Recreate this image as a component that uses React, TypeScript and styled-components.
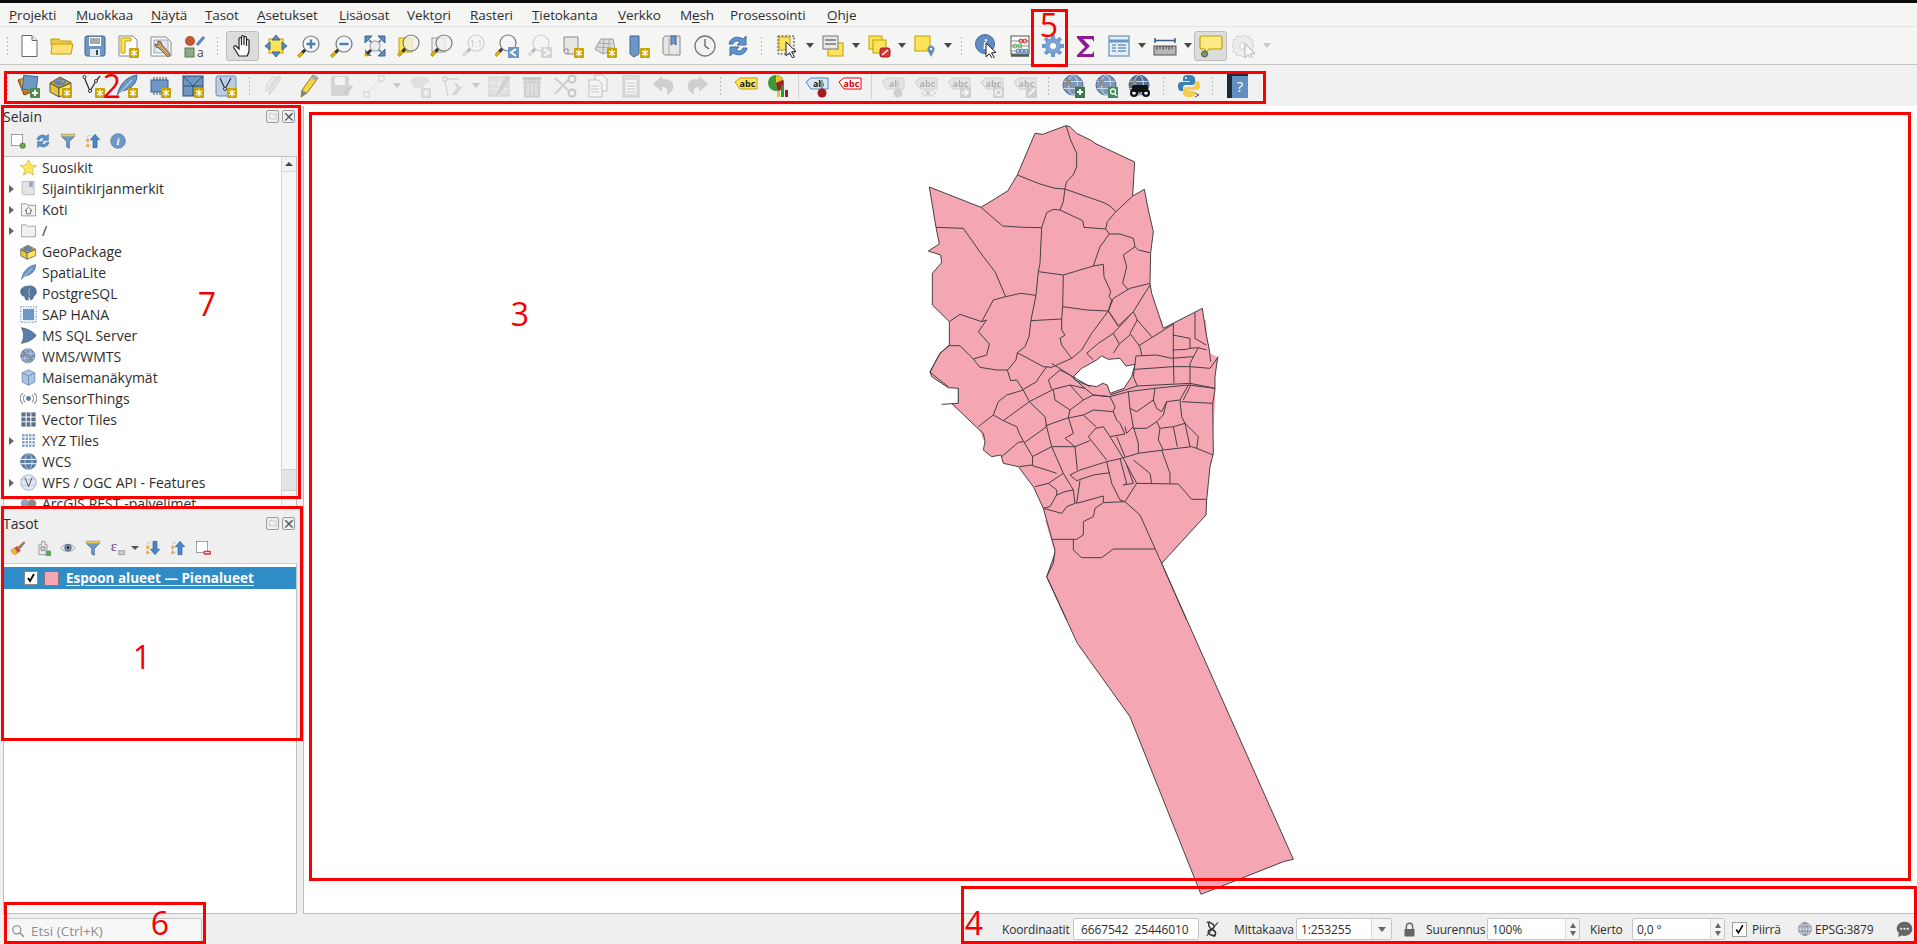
import React from "react";
import styled, { createGlobalStyle } from "styled-components";

const Global = createGlobalStyle`
  html, body { margin: 0; padding: 0; background: #efefef; overflow: hidden; }
  body { font-family: "Open Sans", "Noto Sans", sans-serif; color: #2e2e2e; }
  #root { width: 1917px; height: 944px; }
`;

const Page = styled.div`
  position: relative;
  width: 1917px;
  height: 944px;
  display: flex;
  flex-direction: column;
  overflow: hidden;
  background: #efefef;
`;
const TopEdge = styled.div`height: 3px; background: #0c0c0c; flex: none;`;
const MenuBar = styled.nav`
  height: 24px;
  flex: none;
  display: flex;
  align-items: center;
  padding-left: 1px;
  background: #f5f5f4;
  border-bottom: 1px solid #e3e3e3;
  box-sizing: border-box;
`;
const MenuItem = styled.span<{ $w: number }>`
  width: ${(p) => p.$w}px;
  padding-left: 8px;
  box-sizing: border-box;
  font-size: 13.5px;
  letter-spacing: -0.1px;
  white-space: nowrap;
  color: #2e2e2e;
  u { text-underline-offset: 2px; }
`;
const ToolRow = styled.div<{ $h: number; $bg: string; $line?: boolean }>`
  height: ${(p) => p.$h}px;
  flex: none;
  box-sizing: border-box;
  display: flex;
  align-items: center;
  padding-left: 4px;
  background: ${(p) => p.$bg};
  border-bottom: ${(p) => (p.$line ? "1px solid #c4c4c4" : "0")};
`;
const Grip = styled.div<{ $w?: number }>`
  width: ${(p) => p.$w ?? 16}px;
  flex: none;
  height: 24px;
  position: relative;
  &::after {
    content: "";
    position: absolute;
    left: 50%;
    top: 2px;
    bottom: 2px;
    width: 4px;
    margin-left: -2px;
    background-image: radial-gradient(#bdbdbd 0.8px, transparent 0.9px);
    background-size: 3px 4px;
  }
`;
const ThinSep = styled.div<{ $w: number }>`
  width: ${(p) => p.$w}px;
  flex: none;
  height: 26px;
  position: relative;
  &::after {
    content: "";
    position: absolute;
    left: 50%;
    top: 0;
    bottom: 0;
    width: 1px;
    background: #d2d2d2;
  }
`;
const ToolBtn = styled.div<{ $on?: boolean; $off?: boolean }>`
  width: 33px;
  height: 30px;
  flex: none;
  display: flex;
  align-items: center;
  justify-content: center;
  box-sizing: border-box;
  border-radius: 3px;
  background: ${(p) => (p.$on ? "#dcdcdc" : "transparent")};
  border: 1px solid ${(p) => (p.$on ? "#bcbcbc" : "transparent")};
  svg {
    ${(p) => (p.$off ? "filter: grayscale(1) opacity(.32);" : "")}
  }
`;
const DropArrow = styled.div<{ $off?: boolean }>`
  width: 13px;
  flex: none;
  display: flex;
  justify-content: center;
  &::after {
    content: "";
    border-left: 4px solid transparent;
    border-right: 4px solid transparent;
    border-top: 5px solid ${(p) => (p.$off ? "#c8c8c8" : "#4a4a4a")};
  }
`;
const Main = styled.div`
  flex: 1;
  min-height: 0;
  display: flex;
`;
const Dock = styled.aside`
  width: 303px;
  flex: none;
  display: flex;
  flex-direction: column;
`;
const PanelHead = styled.div`
  height: 20px;
  flex: none;
  display: flex;
  align-items: center;
  padding: 0 8px 0 3px;
  font-size: 14px;
  gap: 3px;
`;
const PanelTitle = styled.span`flex: 1; color: #2e2e2e;`;
const FloatBtn = styled.span`
  width: 11px;
  height: 11px;
  border: 1px solid #9c9c9c;
  border-radius: 2px;
  display: flex;
  align-items: center;
  justify-content: center;
  color: #555;
`;
const PanelTools = styled.div`
  height: 30px;
  flex: none;
  display: flex;
  align-items: center;
  padding-left: 5px;
`;
const PanelBtn = styled.span`
  width: 25px;
  flex: none;
  display: flex;
  justify-content: center;
`;
const PanelDrop = styled.span`
  width: 12px;
  margin-left: -1px;
  margin-right: -1px;
  flex: none;
  display: flex;
  justify-content: center;
  &::after {
    content: "";
    border-left: 4px solid transparent;
    border-right: 4px solid transparent;
    border-top: 4px solid #555;
  }
`;
const TreeBox = styled.div`
  height: 350px;
  flex: none;
  margin: 0 6px 0 3px;
  background: #fff;
  border: 1px solid #bfbfbf;
  border-bottom: 0;
  display: flex;
  overflow: hidden;
  box-sizing: border-box;
`;
const TreeList = styled.div`flex: 1; min-width: 0;`;
const TreeRow = styled.div`
  height: 21px;
  display: flex;
  align-items: center;
  font-size: 14px;
  white-space: nowrap;
`;
const Twisty = styled.span<{ $open: boolean }>`
  width: 13px;
  margin-left: 1px;
  flex: none;
  display: flex;
  justify-content: center;
  &::after {
    content: "";
    visibility: ${(p) => (p.$open ? "visible" : "hidden")};
    border-top: 4px solid transparent;
    border-bottom: 4px solid transparent;
    border-left: 5px solid #666;
  }
`;
const TreeIcon = styled.span`
  width: 18px;
  margin: 0 5px 0 1px;
  flex: none;
  display: flex;
  justify-content: center;
`;
const ScrollBar = styled.div`
  width: 14px;
  flex: none;
  background: #f6f6f6;
  border-left: 1px solid #d4d4d4;
  display: flex;
  flex-direction: column;
  align-items: stretch;
`;
const ScrollCap = styled.div`
  height: 14px;
  flex: none;
  background: #f2f2f2;
  border-bottom: 1px solid #d8d8d8;
  display: flex;
  align-items: center;
  justify-content: center;
  &::after {
    content: "";
    border-left: 4px solid transparent;
    border-right: 4px solid transparent;
    border-bottom: 4px solid #444;
  }
`;
const ScrollTrack = styled.div`flex: 1;`;
const ScrollThumb = styled.div`
  height: 20px;
  flex: none;
  background: #e4e4e4;
  border-top: 1px solid #d0d0d0;
  border-bottom: 1px solid #d0d0d0;
  margin-bottom: 15px;
`;
const Splitter = styled.div`
  height: 7px;
  flex: none;
  display: flex;
  justify-content: center;
  &::after {
    content: "";
    width: 20px;
    height: 2px;
    margin-top: 2px;
    background-image: radial-gradient(#bdbdbd 0.8px, transparent 0.9px);
    background-size: 3px 2px;
  }
`;
const LayerList = styled.div`
  flex: 1;
  margin: 0 6px 0 3px;
  background: #fff;
  border: 1px solid #bfbfbf;
  border-top-color: #d0d0d0;
  padding-top: 3px;
`;
const LayerRow = styled.div`
  height: 22px;
  background: #308cc6;
  display: flex;
  align-items: center;
  padding-left: 20px;
`;
const LayerCheck = styled.span`
  width: 12px;
  height: 12px;
  background: #fff;
  border: 1px solid #8a8a8a;
  display: flex;
  align-items: center;
  justify-content: center;
`;
const Swatch = styled.span`
  width: 15px;
  height: 15px;
  margin-left: 6px;
  background: #f4a6b3;
  border: 1px solid #8f7078;
  box-sizing: border-box;
`;
const LayerName = styled.span`
  margin-left: 7px;
  font-size: 13.5px;
  font-weight: 700;
  color: #fff;
  text-decoration: underline;
  text-underline-offset: 2px;
  white-space: nowrap;
`;
const Canvas = styled.main`
  flex: 1;
  min-width: 0;
  background: #fff;
  border-left: 1px solid #bfbfbf;
  border-bottom: 1px solid #bfbfbf;
  overflow: hidden;
  svg { display: block; width: 100%; height: 100%; }
`;
const StatusBar = styled.footer`
  height: 30px;
  flex: none;
  display: flex;
  align-items: center;
  padding: 0 4px 0 5px;
  background: #efefef;
  font-size: 12px;
`;
const SearchBox = styled.div`
  width: 197px;
  height: 26px;
  margin-top: 4px;
  box-sizing: border-box;
  background: #f7f7f7;
  border: 1px solid #c6c6c6;
  border-radius: 2px;
  display: flex;
  align-items: center;
  padding-left: 5px;
  gap: 6px;
  color: #8d8d8d;
  font-size: 13.5px;
`;
const StatusGroup = styled.div`
  margin-left: auto;
  display: flex;
  align-items: center;
  height: 100%;
`;
const StatusLabel = styled.span<{ $w: number; $gap: number }>`
  width: ${(p) => p.$w}px;
  margin-right: ${(p) => p.$gap}px;
  flex: none;
  white-space: nowrap;
  letter-spacing: -0.15px;
  color: #2e2e2e;
`;
const Field = styled.div<{ $w: number; $gap: number }>`
  width: ${(p) => p.$w}px;
  margin-right: ${(p) => p.$gap}px;
  height: 22px;
  flex: none;
  box-sizing: border-box;
  background: #fff;
  border: 1px solid #c6c6c6;
  border-radius: 2px;
  display: flex;
  align-items: center;
  justify-content: space-between;
  padding-left: 4px;
  letter-spacing: -0.1px;
  white-space: nowrap;
`;
const ComboArrow = styled.span`
  width: 19px;
  height: 100%;
  border-left: 1px solid #d8d8d8;
  background: #f4f4f4;
  display: flex;
  align-items: center;
  justify-content: center;
  &::after {
    content: "";
    border-left: 4px solid transparent;
    border-right: 4px solid transparent;
    border-top: 5px solid #666;
  }
`;
const Spinner = styled.span`
  width: 14px;
  height: 100%;
  background: #f4f4f4;
  border-left: 1px solid #dcdcdc;
  display: flex;
  flex-direction: column;
  align-items: center;
  justify-content: space-around;
  padding: 2px 0;
  box-sizing: border-box;
`;
const SpinUp = styled.i`
  border-left: 3.5px solid transparent;
  border-right: 3.5px solid transparent;
  border-bottom: 5px solid #666;
`;
const SpinDown = styled.i`
  border-left: 3.5px solid transparent;
  border-right: 3.5px solid transparent;
  border-top: 5px solid #666;
`;
const StatusIcon = styled.span<{ $w: number; $gap: number }>`
  width: ${(p) => p.$w}px;
  margin-right: ${(p) => p.$gap}px;
  flex: none;
  display: flex;
  justify-content: center;
`;
const StatusCheck = styled.span`
  width: 13px;
  height: 13px;
  margin-right: 5px;
  background: #fff;
  border: 1px solid #a0a0a0;
  flex: none;
  display: flex;
  align-items: center;
  justify-content: center;
`;
const Note = styled.div<{ $x: number; $y: number; $w: number; $h: number }>`
  position: absolute;
  left: ${(p) => p.$x}px;
  top: ${(p) => p.$y}px;
  width: ${(p) => p.$w}px;
  height: ${(p) => p.$h}px;
  box-sizing: border-box;
  border: 3px solid #fa0000;
  pointer-events: none;
`;
const NoteNum = styled.span<{ $x: number; $y: number }>`
  position: absolute;
  left: ${(p) => p.$x}px;
  top: ${(p) => p.$y}px;
  transform: translate(-50%, -50%);
  color: #f50000;
  font-family: "Open Sans", sans-serif;
  font-size: 32px;
  line-height: 1;
`;

/* ---------- icon parts ---------- */
const Y = "#fde45a";
const YS = "#c4a000";
const B = "#6d97c4";
const BS = "#3f6690";
const Star = () => (
  <g>
    <rect x="13" y="14" width="10" height="10" rx="1" fill="#c9a300" />
    <path d="M18 15.5v7M15 17l6 4M21 17l-6 4" stroke="#fff" strokeWidth="1.3" />
  </g>
);
const Lens = ({ x = 14, y = 9, r = 7, f = "#f3f6f8" }: { x?: number; y?: number; r?: number; f?: string }) => (
  <g>
    <path d={`M${x - r * 0.7} ${y + r * 0.7}L${x - r * 0.7 - 7} ${y + r * 0.7 + 7}`} stroke="#333" strokeWidth="3" />
    <path d={`M${x - r * 0.7 - 3} ${y + r * 0.7 + 3}L${x - r * 0.7 - 7} ${y + r * 0.7 + 7}`} stroke="#e0b000" strokeWidth="3" />
    <circle cx={x} cy={y} r={r} fill={f} stroke="#7a7a7a" strokeWidth="1.2" />
  </g>
);
const Cursor = ({ x = 10, y = 9 }: { x?: number; y?: number }) => (
  <path
    transform={`translate(${x} ${y})`}
    d="M0 0l10 9.5-4.5.3 3 5-2 1-3-5-3.5 3z"
    fill="#fff"
    stroke="#222"
    strokeWidth="1"
  />
);
const Globe = ({ dark }: { dark?: boolean }) => (
  <g>
    <circle cx="11" cy="11" r="10" fill={dark ? "#54708f" : "#7b97bb"} stroke="#4d6a8f" />
    <ellipse cx="11" cy="11" rx="4.5" ry="10" fill="none" stroke="#d8dfe8" strokeWidth=".9" />
    <path d="M1.6 7.5h18.8M1.6 14.5h18.8" stroke="#d8dfe8" strokeWidth=".9" />
    <path d="M4 5l5 1-1 5-4 1zM13 12h5l-2 6-3-1z" fill="#8c8c8c" />
  </g>
);
const AbcTag = ({ t = "abc", f = Y, s = YS, c = "#222" }: { t?: string; f?: string; s?: string; c?: string }) => (
  <g>
    <path d="M1 8l5-4h17v11H6z" fill={f} stroke={s} />
    <text x="13.5" y="13" textAnchor="middle" fontSize="9" fontWeight="700" fontFamily="Open Sans" fill={c}>
      {t}
    </text>
  </g>
);
const Grid = ({ n, f, gap }: { n: number; f: string; gap: number }) => {
  const out: React.ReactElement[] = [];
  const s = (18 - gap * (n - 1)) / n;
  for (let i = 0; i < n; i++)
    for (let j = 0; j < n; j++)
      out.push(<rect key={i * 10 + j} x={3 + i * (s + gap)} y={3 + j * (s + gap)} width={s} height={s} fill={f} />);
  return <g>{out}</g>;
};
const Doc = () => (
  <g>
    <path d="M5 2h9l5 5v15H5z" fill="#fff" stroke="#555" />
    <path d="M8 9h8M8 12h8M8 15h8M8 18h8" stroke="#666" />
  </g>
);
const Pages = () => (
  <g>
    <path d="M9 1h8l4 4v12H9z" fill="#fff" stroke="#555" />
    <path d="M3 6h9l4 4v13H3z" fill="#fff" stroke="#555" />
    <path d="M5 12h8M5 15h8M5 18h8" stroke="#666" />
  </g>
);

const ICONS: Record<string, React.ReactNode> = {
  new: (<g><path d="M5 1.5h10l5 5v16H5z" fill="#fff" stroke="#666" /><path d="M15 1.5v5h5" fill="#eee" stroke="#666" /></g>),
  open: (<g><path d="M1 5h8l2 2h10v4H1z" fill="#e9c94a" stroke={YS} /><path d="M1 20l1-10h21l-2 10z" fill="#fde073" stroke={YS} /></g>),
  save: (<g><rect x="2" y="2" width="20" height="20" rx="2" fill={B} stroke={BS} /><rect x="6" y="3" width="12" height="9" fill="#fff" /><path d="M7 5h10M7 7h10M7 9h10" stroke="#555" /><rect x="7" y="15" width="10" height="7" fill="#e8e8e8" /><rect x="13" y="16" width="2" height="5" fill="#444" /></g>),
  layout: (<g><path d="M3 2h14l4 4v16H3z" fill="#fff" stroke="#888" /><path d="M5 4h10v3H9v12H5z" fill={Y} stroke={YS} /><Star /></g>),
  manager: (<g><path d="M2 3h15l5 5v14H2z" fill="#fff" stroke="#888" /><rect x="5" y="6" width="14" height="13" fill="#dfe7f2" stroke="#9ab" /><path d="M9 7l3 1 1 3 8 9-2 3-9-9-3-1-1-3 3 1z" fill="#c9a26a" stroke="#6b5a3a" /></g>),
  style: (<g><circle cx="8" cy="7" r="5" fill="#c1582e" /><rect x="3" y="14" width="9" height="9" fill="#8aab8a" stroke="#5d7d5d" /><path d="M15 11L22 3" stroke="#5b86b8" strokeWidth="3" /><text x="15" y="23" fontSize="12" fontFamily="Open Sans" fill="#444">a</text></g>),
  hand: (<path d="M8 22l-5-8c-1-2 1-3 2-2l3 3V5c0-2 2.500-2 2.500 0v6V3c0-2 2.500-2 2.500 0v8V4c0-2 2.500-2 2.500 0v8V7c0-2 2.500-2 2.500 0v9c0 3-1 4-2 6z" fill="#fff" stroke="#222" strokeWidth="1.2" />),
  pan: (<g><rect x="5" y="5" width="14" height="14" fill={Y} stroke={YS} /><path d="M12 1l4 5H8zM12 23l4-5H8zM1 12l5-4v8zM23 12l-5-4v8z" fill="#5f8cbc" stroke={BS} /></g>),
  zoomin: (<g><Lens x={14} y={10} r={8} /><path d="M14 5.500v9M9.500 10h9" stroke="#4e7db0" strokeWidth="2.4" /></g>),
  zoomout: (<g><Lens x={14} y={10} r={8} /><path d="M9.500 10h9" stroke="#4e7db0" strokeWidth="2.4" /></g>),
  full: (<g><path d="M2 2h7L2 9zM22 2v7l-7-7zM22 22h-7l7-7z" fill="#5f8cbc" stroke={BS} /><path d="M2 15l7 7H2z" fill="#5f8cbc" /><path d="M6 6l4 4M18 6l-4 4M18 18l-4-4" stroke="#5f8cbc" strokeWidth="2" /><circle cx="12" cy="12" r="5" fill="#e8edf2" stroke="#999" /><path d="M8 16l-5 5" stroke="#333" strokeWidth="3" /><path d="M4 20l-2 2" stroke="#e0b000" strokeWidth="3" /></g>),
  zlayer: (<g><rect x="3" y="4" width="13" height="14" fill={Y} stroke={YS} /><Lens x={15} y={9} r={8} f="rgba(240,240,240,.75)" /></g>),
  zsel: (<g><rect x="3" y="4" width="13" height="14" fill="#eee" stroke="#999" /><Lens x={15} y={9} r={8} f="rgba(240,240,240,.75)" /></g>),
  znative: (<g><Lens x={14} y={9} r={8} /><text x="14" y="13" textAnchor="middle" fontSize="9" fontFamily="Open Sans" fill="#555">1:1</text></g>),
  zlast: (<g><Lens x={13} y={9} r={8} /><rect x="13" y="13" width="11" height="11" fill={B} /><path d="M21 15l-5 3.500 5 3.500" fill="none" stroke="#fff" strokeWidth="2" /></g>),
  znext: (<g><Lens x={13} y={9} r={8} /><rect x="13" y="13" width="11" height="11" fill={B} /><path d="M16 15l5 3.500-5 3.500" fill="none" stroke="#fff" strokeWidth="2" /></g>),
  mapview: (<g><path d="M3 3h14v17H7c-3 0-4-1-4-3z" fill="#e6e6e6" stroke="#888" /><path d="M3 17c0-2 2-2 4-2v5" fill="none" stroke="#888" /><Star /></g>),
  view3d: (<g><path d="M1 15l6-10h12l2 10-12 5z" fill="#dcdcdc" stroke="#999" /><path d="M5 9l13 1M3 13l16 1M10 5l-1 14M15 5l0 13" stroke="#aaa" /><Star /></g>),
  bookmark: (<g><path d="M3 2h9v18l-5 3-4-3z" fill={B} stroke={BS} /><Star /></g>),
  bookmarks: (<g><path d="M5 2h15v19H6c-2 0-3-1-3-3V4z" fill="#e6e6e6" stroke="#888" /><path d="M9 20V4" stroke="#aaa" /><path d="M11 2h5v9l-2.500-2-2.500 2z" fill={B} stroke={BS} /></g>),
  clock: (<g><circle cx="12" cy="12" r="10" fill="#f3f3f3" stroke="#777" strokeWidth="1.3" /><path d="M12 5v7l4 3" fill="none" stroke="#555" strokeWidth="1.2" /></g>),
  refresh: (<g><path d="M3 10c1-6 8-9 14-5l3-3v9h-9l3-3c-3-2-6-1-7 2z" fill="#5e94cf" stroke="#3f6fa5" /><path d="M21 14c-1 6-8 9-14 5l-3 3v-9h9l-3 3c3 2 6 1 7-2z" fill="#5e94cf" stroke="#3f6fa5" /></g>),
  select: (<g><rect x="3" y="2" width="16" height="18" fill="#eee" stroke="#333" strokeDasharray="2 1.500" /><rect x="4" y="3" width="11" height="13" fill={Y} stroke={YS} /><Cursor x={11} y={8} /></g>),
  selattr: (<g><rect x="7" y="9" width="15" height="13" fill={Y} stroke={YS} /><rect x="2" y="2" width="15" height="13" fill="#e8e8e8" stroke="#777" /><path d="M4 6h11M4 10h11" stroke="#777" strokeWidth="1.500" /></g>),
  deselect: (<g><rect x="2" y="2" width="13" height="13" fill={Y} stroke={YS} /><rect x="6" y="6" width="13" height="13" fill={Y} stroke={YS} /><rect x="13" y="14" width="10" height="9" rx="2" fill="#d33" stroke="#922" /><path d="M15 21l6-5" stroke="#fff" strokeWidth="1.500" /></g>),
  selloc: (<g><rect x="2" y="2" width="15" height="15" fill={Y} stroke={YS} /><path d="M18 23l-3-6a3.500 3.500 0 1 1 6 0z" fill="#5f8cbc" /><circle cx="18" cy="15" r="1.200" fill="#fff" /></g>),
  identify: (<g><circle cx="10" cy="10" r="9.500" fill="#5f8cc4" stroke="#456b96" /><text x="10" y="15" textAnchor="middle" fontSize="14" fontStyle="italic" fontWeight="700" fontFamily="Liberation Serif" fill="#fff">i</text><Cursor x={11} y={9} /></g>),
  abacus: (<g><rect x="3" y="2" width="18" height="18" fill="#fff" stroke="#555" /><path d="M3 21.500h18" stroke="#555" strokeWidth="2.500" /><path d="M3 7h18M3 12h18M3 17h18" stroke="#888" /><circle cx="13" cy="7" r="2" fill="none" stroke="#c22" /><circle cx="17" cy="7" r="2" fill="none" stroke="#c22" /><circle cx="7" cy="12" r="2" fill="none" stroke="#4a4" /><circle cx="12" cy="12" r="2" fill="none" stroke="#4a4" /><circle cx="10" cy="17" r="2" fill="none" stroke="#37b" /><circle cx="14" cy="17" r="2" fill="none" stroke="#37b" /><circle cx="18" cy="17" r="2" fill="none" stroke="#37b" /></g>),
  gear: (<g stroke="#6f9ad0" fill="#7aa3d6"><path d="M12 1v22M1 12h22M4.200 4.200l15.600 15.600M19.800 4.200L4.200 19.800" strokeWidth="4" /><circle cx="12" cy="12" r="7.500" /><circle cx="12" cy="12" r="3" fill="#fff" stroke="none" /></g>),
  sigma: (<path d="M3 2h17v6l-2-3H9l7 7-8 8h10l2-3v6H3v-2l8-8-8-9z" fill="#8e1b93" />),
  table: (<g><rect x="2" y="2" width="20" height="20" fill="#e6eef8" stroke="#6d97c4" strokeWidth="1.300" /><path d="M2 7h20" stroke="#6d97c4" strokeWidth="3" /><path d="M5 11h4M11 11h8M5 14h4M11 14h8M5 17h4M11 17h8" stroke="#6d97c4" strokeWidth="1.400" /></g>),
  ruler: (<g><path d="M2 4v5M22 4v5M2 6.500h20" stroke="#355d85" strokeWidth="1.500" /><rect x="1" y="12" width="22" height="9" fill="#b8b8b8" stroke="#555" /><path d="M4 12v4M7 12v3M10 12v4M13 12v3M16 12v4M19 12v3" stroke="#444" /></g>),
  tip: (<g><path d="M3 2h18c1.500 0 2 1 2 2v9c0 1.500-1 2-2 2H10l-3 4-1-4H3c-1 0-2-.5-2-2V4c0-1 1-2 2-2z" fill="#fdea82" stroke="#c4a000" strokeWidth="1.200" /><circle cx="5.500" cy="20" r="3" fill="#7a9a5a" stroke="#555" /></g>),
  action: (<g><path d="M11 1l3 2 3-1 1 3 3 1-1 3 2 3-2 3 1 3-3 1-1 3-3-1-3 2-3-2-3 1-1-3-3-1 1-3-2-3 2-3-1-3 3-1 1-3 3 1z" fill="#ddd" stroke="#888" /><circle cx="11" cy="12" r="5" fill="#bbb" /><path d="M9 9l5 3-5 3z" fill="#fff" /><Cursor x={13} y={10} /></g>),
  dsm: (<g><path d="M2 6l8-2 6 14-8 3z" fill="#d46a2a" stroke="#8a4418" /><path d="M4 5h12l2 12H6z" fill="#e9b64a" stroke="#a67c1a" /><rect x="7" y="2" width="14" height="14" fill="#6d97c4" stroke={BS} transform="rotate(6 14 9)" /><rect x="14" y="14" width="10" height="10" rx="1" fill="#4f8a4f" /><path d="M19 16v6M16 19h6" stroke="#fff" strokeWidth="1.800" /></g>),
  gpkg: (<g><path d="M1 9l9 5v9l-9-5z" fill="#e4c83a" stroke="#555" /><path d="M10 14l12-5v9l-12 5z" fill={Y} stroke="#555" /><path d="M1 9l10-6 11 6-12 5z" fill="#c7a517" stroke="#555" /><ellipse cx="11" cy="8" rx="6" ry="3.500" fill="#6684ab" /><path d="M8 7h3l1 2M13 6l2 2" stroke="#bbb" /><Star /></g>),
  shape: (<g><path d="M2 3l6 14 6-10 4-5" fill="none" stroke="#333" strokeWidth="1.300" /><circle cx="2.500" cy="3" r="1.500" fill="#fff" stroke="#333" /><circle cx="8" cy="17" r="1.500" fill="#fff" stroke="#333" /><circle cx="14" cy="7" r="1.500" fill="#fff" stroke="#333" /><Star /></g>),
  feather: (<g><path d="M2 22C4 12 10 3 22 1c0 8-5 14-15 16z" fill="#6d97c4" stroke={BS} /><path d="M2 22L17 6" stroke="#dbe6f2" /><Star /></g>),
  chip: (<g><rect x="3" y="6" width="17" height="12" fill="#6d97c4" stroke={BS} /><path d="M6 3v3M9 3v3M12 3v3M15 3v3M18 3v3M6 18v3M9 18v3M12 18v3M15 18v3" stroke="#456" /><Star /></g>),
  mesh: (<g><rect x="2" y="2" width="20" height="20" fill="#6d97c4" stroke="#2f4f6f" /><path d="M2 2l10 10L22 2M12 12v10M2 12h20" stroke="#2f4f6f" fill="none" /><Star /></g>),
  virtual: (<g><rect x="2" y="2" width="20" height="20" rx="2" fill="#b9cde4" stroke="#6d8fb4" /><path d="M6 4l5 11 6-11" fill="none" stroke="#333" strokeWidth="1.200" /><circle cx="11" cy="15" r="1.500" fill="#fff" stroke="#333" /><Star /></g>),
  pencils: (<g><path d="M6 21l1-8 8-11 3 2-8 12z" fill="#ccc" stroke="#888" /><path d="M3 18l1-8 6-8 3 2-6 9z" fill="#ddd" stroke="#999" /></g>),
  pencil: (<g><path d="M5 23l1-7L17 1l5 3-11 15z" fill="#f2d54a" stroke="#9a7a14" /><path d="M5 23l1-7 5 3z" fill="#888" /><path d="M17 1l5 3-2 3-5-3z" fill="#aaa" /></g>),
  saveedit: (<g><rect x="2" y="2" width="18" height="20" rx="2" fill="#9a9a9a" /><rect x="6" y="3" width="10" height="8" fill="#fff" /><path d="M14 22l2-5 6-6 2 2-6 6z" fill="#777" /></g>),
  digitize: (<g><path d="M4 20L19 5" stroke="#888" strokeDasharray="2 2" /><rect x="2" y="18" width="5" height="5" fill="#fff" stroke="#888" /><rect x="17" y="2" width="5" height="5" fill="#fff" stroke="#888" /></g>),
  polygon: (<g><path d="M3 5c4-3 10-2 16-2 3 2 3 5 1 6-4 2-5 3-5 5H7c-3-3-5-6-4-9z" fill="#bbb" /><Star /></g>),
  vertex: (<g><path d="M2 3h4v4H2zM6 5h12M4 7l3 15" fill="none" stroke="#777" /><path d="M10 21l6-7-3-4 3-1 3 4 3-1-7 9z" fill="#999" /></g>),
  modify: (<g><rect x="2" y="3" width="20" height="19" fill="#bbb" stroke="#888" /><path d="M2 9h20M2 15h20M12 3v19" stroke="#eee" /><path d="M10 21l3-7 7-12 3 2-8 12z" fill="#999" stroke="#777" /></g>),
  trash: (<g><rect x="3" y="3" width="18" height="3" fill="#777" /><path d="M4 7h16l-1 16H5z" fill="#999" stroke="#666" /><path d="M8 10v11M12 10v11M16 10v11" stroke="#ddd" /></g>),
  cut: (<g><path d="M2 4l14 13M2 20L16 5" stroke="#888" strokeWidth="2" /><circle cx="19" cy="19" r="3.500" fill="none" stroke="#666" strokeWidth="2" /><circle cx="19" cy="5" r="3.500" fill="none" stroke="#666" strokeWidth="2" /></g>),
  copy: <Pages />,
  paste: (<g><rect x="4" y="2" width="16" height="21" fill="#ccc" stroke="#666" /><rect x="6" y="5" width="12" height="16" fill="#fff" stroke="#777" /><path d="M8 9h8M8 12h8M8 15h8M8 18h8" stroke="#666" /></g>),
  undo: (<path d="M10 2L1 10l9 8v-5c4 0 6 2 5 8 5-3 7-6 6-11-1-4-5-5-11-5z" fill="#888" />),
  redo: (<path d="M14 2l9 8-9 8v-5c-4 0-6 2-5 8-5-3-7-6-6-11 1-4 5-5 11-5z" fill="#888" />),
  label: <AbcTag />,
  diagram: (<g><circle cx="9" cy="9" r="8" fill="#3a9a3a" /><path d="M9 9V1a8 8 0 0 1 7 5z" fill="#f0c020" /><path d="M9 9l7-3a8 8 0 0 1-5 11z" fill="#a02020" /><rect x="10" y="17" width="3" height="6" fill="#f0c020" /><rect x="14" y="11" width="3" height="12" fill="#2a9a2a" /><rect x="18" y="16" width="3" height="7" fill="#902020" /></g>),
  abpin: (<g><AbcTag t="ab" f="#d9e8f8" s="#4a86c8" /><path d="M17 6v11" stroke="#999" strokeWidth="2" /><circle cx="17" cy="19" r="4.500" fill="#a61c1c" /></g>),
  abcred: <AbcTag f="#fff" s="#e00" c="#d00" />,
  abpin2: (<g><AbcTag t="ab" f="#ccc" s="#888" /><path d="M17 6v11" stroke="#999" strokeWidth="2" /><circle cx="17" cy="19" r="4.500" fill="#888" /></g>),
  abeye: (<g><AbcTag f="#ccc" s="#888" /><path d="M7 19c4-4 10-4 15 0-5 4-11 4-15 0z" fill="#eee" stroke="#888" /><circle cx="14" cy="19" r="2" fill="#777" /></g>),
  abarrow: (<g><AbcTag f="#ccc" s="#888" /><rect x="13" y="13" width="11" height="11" rx="1" fill="#888" /><path d="M15 18.500h5M18 15.500l3 3-3 3" stroke="#fff" strokeWidth="1.800" fill="none" /></g>),
  abrot: (<g><AbcTag f="#ccc" s="#888" /><rect x="13" y="13" width="11" height="11" rx="1" fill="#888" /><circle cx="18.500" cy="18.500" r="3" fill="none" stroke="#fff" strokeWidth="1.500" /></g>),
  abedit: (<g><AbcTag f="#ccc" s="#888" /><rect x="13" y="13" width="11" height="11" rx="1" fill="#888" /><path d="M15 22l1-3 5-5 1.500 1.500-5 5z" fill="#fff" /></g>),
  globeadd: (<g><Globe /><rect x="13" y="13" width="10" height="11" fill="#3f7a4f" /><path d="M18 15v6M15 18h6" stroke="#fff" strokeWidth="1.800" /></g>),
  globefind: (<g><Globe /><rect x="13" y="13" width="10" height="11" fill="#3f8a5f" /><circle cx="18" cy="17.500" r="2.500" fill="none" stroke="#fff" strokeWidth="1.300" /><path d="M20 20l2 2" stroke="#fff" strokeWidth="1.300" /></g>),
  globebin: (<g><Globe dark /><circle cx="6" cy="19" r="4" fill="#111" /><circle cx="18" cy="19" r="4" fill="#111" /><circle cx="6" cy="19" r="1.800" fill="#fff" /><circle cx="18" cy="19" r="1.800" fill="#fff" /><rect x="4" y="11" width="16" height="7" rx="2" fill="#111" /></g>),
  python: (<g><path d="M12 1c-5 0-6 1.500-6 4v2h6.500v1H4C1.500 8 1 10 1 12.500S2 17 4 17h2v-3c0-2 1-3 3-3h6c2 0 3-1 3-3V5c0-2.500-2-4-6-4z" fill="#3f7fb5" /><path d="M12 23c5 0 6-1.500 6-4v-2h-6.500v-1H20c2.500 0 3-2 3-4.500S22 7 20 7h-2v3c0 2-1 3-3 3H9c-2 0-3 1-3 3v3c0 2.500 2 4 6 4z" fill="#f5cf47" /><circle cx="9" cy="4" r="1" fill="#fff" /><path d="M18 19l4 2-4 2" fill="none" stroke="#555" /></g>),
  help: (<g><rect x="3" y="1" width="19" height="23" fill="#628fc2" /><rect x="1" y="0" width="5" height="24" fill="#1e2a36" /><path d="M3 1h19" stroke="#1e2a36" strokeWidth="2" /><text x="14" y="18" textAnchor="middle" fontSize="15" fontFamily="Open Sans" fill="#fff">?</text></g>),
  /* panel tools */
  addres: (<g><rect x="2" y="2" width="17" height="17" fill="#fff" stroke="#777" /><circle cx="19" cy="19" r="4" fill="#6aa84f" stroke="#3a6a2a" /></g>),
  filter: (<g><path d="M2 2h20v3l-8 8v10l-4-2v-8L2 5z" fill="#6d97c4" stroke={BS} /><path d="M2 2h20v3H2z" fill="#f0d040" /></g>),
  collapse: (<g><path d="M4 4h6M4 4v16M4 11h5M4 19h5" fill="none" stroke="#aaa" strokeDasharray="2 1" /><rect x="2" y="9" width="4" height="4" fill="#f2a33a" /><rect x="2" y="17" width="4" height="4" fill="#f2a33a" /><path d="M15 2l7 8h-4v12h-6V10H8z" fill="#4a86c8" stroke="#2f5f95" /></g>),
  expand: (<g><path d="M4 4h6M4 4v16M4 11h5M4 19h5" fill="none" stroke="#aaa" strokeDasharray="2 1" /><rect x="2" y="9" width="4" height="4" fill="#f2a33a" /><rect x="2" y="17" width="4" height="4" fill="#f2a33a" /><path d="M15 22l7-8h-4V2h-6v12H8z" fill="#4a86c8" stroke="#2f5f95" /></g>),
  info: (<g><circle cx="12" cy="12" r="11" fill="#6d97c4" stroke="#4d76a4" /><text x="12" y="18" textAnchor="middle" fontSize="17" fontStyle="italic" fontWeight="700" fontFamily="Liberation Serif" fill="#fff">i</text></g>),
  brush: (<g><path d="M1 15l10-6 5 7-8 6c-3 0-6-3-7-7z" fill="#c64a3c" /><path d="M1 15l6-3 4 6-3 4c-3 0-6-3-7-7z" fill="#e8b93a" /><path d="M12 10l9-8 2 2-8 10z" fill="#8a7a5a" /></g>),
  addgroup: (<g><path d="M6 7h4V2h5v5h3v15H6z" fill="#eee" stroke="#777" /><path d="M9 10h6v6H9z" fill="#ccc" stroke="#777" /><rect x="16" y="16" width="8" height="8" fill="#5aa85a" /></g>),
  eye: (<g><path d="M1 12c5-7 16-8 22 0-6 7-17 7-22 0z" fill="#e6e6e6" stroke="#888" /><circle cx="12" cy="11.500" r="5" fill="#7a9cc4" stroke="#456" /><circle cx="12" cy="11.500" r="2" fill="#222" /></g>),
  epsilon: (<g><text x="1" y="17" fontSize="23" fontFamily="Liberation Serif" fill="#6d3f87">ε</text><path d="M13 16h9v6h-9z" fill="#ccc" stroke="#888" /></g>),
  remove: (<g><rect x="2" y="2" width="17" height="17" fill="#fff" stroke="#777" /><rect x="13" y="16" width="11" height="6" rx="1" fill="#d43d3d" /><path d="M15 19h7" stroke="#fff" strokeWidth="1.500" /></g>),
  /* tree */
  star: (<path d="M12 1l3.400 7.400 8 .9-6 5.400 1.700 8L12 18.700 4.900 22.700l1.700-8-6-5.400 8-.9z" fill="#fbe85c" stroke="#c9b23a" />),
  tbook: (<g><path d="M3 2h17v19H6c-2 0-3-1-3-3z" fill="#e4e4e4" stroke="#aaa" /><path d="M13 2h5v9l-2.500-2-2.500 2z" fill="#8ca9c9" /></g>),
  thome: (<g><path d="M2 4h7l2 2h11v15H2z" fill="#f4f4f4" stroke="#777" /><path d="M12 9l5 4.500h-2V18H9v-4.500H7z" fill="#fff" stroke="#444" /></g>),
  tfolder: (<path d="M2 4h7l2 2h11v15H2z" fill="#f0f0f0" stroke="#888" />),
  tpg: (<g><path d="M9 21c-2-1-2-3-2-5-4 0-6-3-6-7 0-5 5-7 9-7 3-1 6-1 8 0 3 1 5 4 5 8 0 3-2 5-4 6 0 3-2 5-4 5-1-3-2-4-2-6-2 1-2 4-1 6z" fill="#58779b" stroke="#3c5877" /><path d="M14 4c-2 3-2 7 0 11" stroke="#c9d4e2" fill="none" /></g>),
  tchip: (<g><rect x="1" y="1" width="22" height="22" fill="none" stroke="#7b9cc4" strokeWidth="2" strokeDasharray="1.500 2" /><rect x="4" y="4" width="16" height="16" fill="#6d97c4" /></g>),
  tmssql: (<path d="M2 1c8 1 16 5 21 11-5 6-13 10-21 11 4-7 4-15 0-22z" fill="#5a7ea8" stroke="#3c5877" />),
  tglobe: <Globe />,
  tcube: (<g><path d="M12 1l9 4.500v13L12 23l-9-4.500v-13z" fill="#aac4e2" stroke="#5a7ea8" /><path d="M3 5.500L12 10l9-4.500M12 10v13" fill="none" stroke="#5a7ea8" /></g>),
  twave: (<g><circle cx="12" cy="12" r="3.500" fill="#5a7ea8" /><path d="M7 7c-3 3-3 7 0 10M17 7c3 3 3 7 0 10M4 4.500c-5 4-5 11 0 15M20 4.500c5 4 5 11 0 15" fill="none" stroke="#8a8a8a" strokeWidth="1.500" /></g>),
  tvector: (<g><rect x="2" y="2" width="20" height="20" fill="#5c6f86" /><path d="M8.600 2v20M15.300 2v20M2 8.600h20M2 15.300h20" stroke="#fff" strokeWidth="1.500" /></g>),
  txyz: <Grid n={4} f="#7b9cc4" gap={1.500} />,
  twcs: (<g><circle cx="12" cy="12" r="11" fill="#5a7ea8" stroke="#3c5877" /><path d="M1 9h22M1 15h22" stroke="#e0e6ee" strokeWidth="1.500" /><ellipse cx="12" cy="12" rx="5" ry="11" fill="none" stroke="#e0e6ee" /></g>),
  twfs: (<g><circle cx="12" cy="12" r="11" fill="#dfe8f2" stroke="#7b9cc4" /><path d="M1 8h22M1 16h22" stroke="#a9bdd4" /><path d="M7 5l5 13 5-13" fill="none" stroke="#555" strokeWidth="1.400" /></g>),
  tarc: (<g><circle cx="7" cy="12" r="6" fill="#8aa4c4" /><circle cx="17" cy="12" r="6" fill="#8a8a8a" /></g>),
  /* status */
  search: (<g><circle cx="10" cy="10" r="7" fill="none" stroke="#8a8a8a" strokeWidth="2" /><path d="M15 15l7 7" stroke="#8a8a8a" strokeWidth="2.500" /></g>),
  crossed: (<g><path d="M5 3c6 0 10 3 10 6s-8 3-8 7 7 5 10 5M9 2c-3 3-2 8 4 11s4 8 0 9" fill="none" stroke="#333" strokeWidth="2" /><path d="M5 21L20 3" stroke="#333" strokeWidth="1.500" /></g>),
  lock: (<g><path d="M7 11V7a5 5 0 0 1 10 0v4" fill="none" stroke="#666" strokeWidth="2.200" /><rect x="4" y="11" width="16" height="12" rx="1" fill="#666" /></g>),
  sglobe: (<g><circle cx="12" cy="12" r="11" fill="#cfd6df" stroke="#667" /><path d="M1 8h22M1 16h22M12 1v22" stroke="#667" /><ellipse cx="12" cy="12" rx="5" ry="11" fill="none" stroke="#667" /></g>),
  msg: (<g><path d="M12 1c6 0 11 4 11 10s-5 10-11 10c-2 0-3 0-4-1l-5 3 1-6c-2-2-3-4-3-6C1 5 6 1 12 1z" fill="#666" /><circle cx="7.500" cy="11" r="1.500" fill="#fff" /><circle cx="12" cy="11" r="1.500" fill="#fff" /><circle cx="16.500" cy="11" r="1.500" fill="#fff" /></g>),
};

const Ico = ({ n, s = 24 }: { n: string; s?: number }) => (
  <svg width={s} height={s} viewBox="0 0 24 24">
    {ICONS[n]}
  </svg>
);

type Tool =
  | { k: "b"; n: string; on?: boolean; off?: boolean }
  | { k: "d"; off?: boolean }
  | { k: "g"; w?: number }
  | { k: "l"; w: number };
const b = (n: string, off?: boolean, on?: boolean): Tool => ({ k: "b", n, off, on });
const d = (off?: boolean): Tool => ({ k: "d", off });
const g = (w?: number): Tool => ({ k: "g", w });
const l = (w: number): Tool => ({ k: "l", w });

const ROW1: Tool[] = [
  g(8), b("new"), b("open"), b("save"), b("layout"), b("manager"), b("style"), g(),
  b("hand", false, true), b("pan"), b("zoomin"), b("zoomout"), b("full"), b("zlayer"), b("zsel"), b("znative", true),
  b("zlast"), b("znext", true), b("mapview"), b("view3d"), b("bookmark"), b("bookmarks"), b("clock"), b("refresh"), g(),
  b("select"), d(), b("selattr"), d(), b("deselect"), d(), b("selloc"), d(), g(),
  b("identify"), b("abacus"), b("gear"), b("sigma"), b("table"), d(), b("ruler"), d(), b("tip", false, true), b("action", true), d(true),
];
const ROW2: Tool[] = [
  g(7), b("dsm"), b("gpkg"), b("shape"), b("feather"), b("chip"), b("mesh"), b("virtual"), g(),
  b("pencils", true), b("pencil"), b("saveedit", true), b("digitize", true), d(true), b("polygon", true), b("vertex", true), d(true),
  b("modify", true), b("trash", true), b("cut", true), b("copy", true), b("paste", true), b("undo", true), b("redo", true), g(),
  b("label"), b("diagram"), l(5), b("abpin"), b("abcred"), l(10),
  b("abpin2", true), b("abeye", true), b("abarrow", true), b("abrot", true), b("abedit", true), g(),
  b("globeadd"), b("globefind"), b("globebin"), g(), b("python"), g(), b("help"),
];

const Tools = ({ items }: { items: Tool[] }) => (
  <>
    {items.map((t, i) => {
      if (t.k === "b")
        return (
          <ToolBtn key={i} $on={t.on} $off={t.off}>
            <Ico n={t.n} />
          </ToolBtn>
        );
      if (t.k === "d") return <DropArrow key={i} $off={t.off} />;
      if (t.k === "g") return <Grip key={i} $w={t.w} />;
      return <ThinSep key={i} $w={t.w} />;
    })}
  </>
);

const MENU: [React.ReactNode, number][] = [
  [<><u>P</u>rojekti</>, 67],
  [<><u>M</u>uokkaa</>, 75],
  [<><u>N</u>äytä</>, 54],
  [<><u>T</u>asot</>, 52],
  [<><u>A</u>setukset</>, 82],
  [<><u>L</u>isäosat</>, 68],
  [<>Vekt<u>o</u>ri</>, 63],
  [<><u>R</u>asteri</>, 62],
  [<><u>T</u>ietokanta</>, 86],
  [<><u>V</u>erkko</>, 62],
  [<>M<u>e</u>sh</>, 50],
  [<>Prosessointi</>, 97],
  [<><u>O</u>hje</>, 50],
];

const TREE: [string, string, boolean][] = [
  ["star", "Suosikit", false],
  ["tbook", "Sijaintikirjanmerkit", true],
  ["thome", "Koti", true],
  ["tfolder", "/", true],
  ["gpkg2", "GeoPackage", false],
  ["feather2", "SpatiaLite", false],
  ["tpg", "PostgreSQL", false],
  ["tchip", "SAP HANA", false],
  ["tmssql", "MS SQL Server", false],
  ["tglobe", "WMS/WMTS", false],
  ["tcube", "Maisemanäkymät", false],
  ["twave", "SensorThings", false],
  ["tvector", "Vector Tiles", false],
  ["txyz", "XYZ Tiles", true],
  ["twcs", "WCS", false],
  ["twfs", "WFS / OGC API - Features", true],
  ["tarc", "ArcGIS REST -palvelimet", false],
];
ICONS.gpkg2 = (
  <g>
    <path d="M1 9l9 5v9l-9-5z" fill="#e4c83a" stroke="#555" />
    <path d="M10 14l12-5v9l-12 5z" fill={Y} stroke="#555" />
    <path d="M1 9l10-6 11 6-12 5z" fill="#c7a517" stroke="#555" />
    <ellipse cx="11" cy="8" rx="6" ry="3.500" fill="#6684ab" />
  </g>
);
ICONS.feather2 = (
  <g>
    <path d="M2 22C4 12 10 3 22 1c0 8-5 14-15 16z" fill="#6d97c4" stroke={BS} />
    <path d="M2 22L17 6" stroke="#dbe6f2" />
  </g>
);

/* ---------- map, traced from the reference crops ---------- */
const FILL_A =
  "88,201 243,262 323,213 352,165 405,40 428,43 498,17 510,20 530,40 575,62 585,70 704,126 698,228 733,208 745,270 760,335 752,398 750,490 755,520 790,625 907,565 918,640 928,690 932,725 955,710 945,760 945,850 938,960 250,960 235,920 155,853 175,850 175,805 145,803 95,770 90,755 120,700 148,677 148,605 97,555 97,460 125,428 122,405 85,393 118,372 108,322";
const FILL_B =
  "88,0 88,75 60,100 30,157 85,200 113,205 113,248 95,250 170,322 190,340 195,365 190,390 215,410 243,405 250,430 295,440 340,500 370,565 405,690 400,730 380,770 440,900 800,900 725,730 858,585 860,540 870,440 880,400 878,250 885,210 885,170 893,112 870,100 862,60 858,0 780,0 730,24 725,0";
const FILL_C = "140,170 165,100 135,0 600,0 485,130 880,1018 850,1025 603,1123 390,590 232,370";
const HOLE =
  "522,768 545,745 590,720 605,708 625,718 660,715 678,738 705,733 695,770 672,805 630,820 622,795 608,790 590,800 560,795 525,780";

const LINES_A = [
  FILL_A.split(" ").slice(0, 24).join(" "),
  "175,805 145,803 95,770 90,755 120,700 148,677 148,605 97,555 97,460 125,428 122,405 85,393 118,372 108,322 88,201",
  "125,853 175,850 175,805",
  "498,17 512,60 530,100 530,140 520,165 500,185 495,205 490,245 480,270",
  "352,165 420,192 465,205 495,207 560,230 612,248 630,258 648,275",
  "698,228 648,275 622,305 617,327 628,342 660,342 700,355 705,380 715,390 750,398",
  "243,262 308,318 370,322 425,323",
  "108,322 190,325 250,410 285,455 317,530 362,520 408,526",
  "480,270 460,268 440,278 425,323 420,430 415,455 408,526 393,600 387,650 375,680 352,698",
  "480,270 548,302 552,322 617,327",
  "628,342 600,380 580,438 490,465 415,455",
  "580,438 610,433 612,470 632,515 627,530 635,540 625,573 560,570 488,560 490,465",
  "488,560 485,597 393,602",
  "485,597 485,630 495,645 480,655 485,675 515,715",
  "515,715 545,690 575,640 625,573 655,618",
  "705,380 670,405 680,440 668,490 685,510",
  "750,490 690,505 640,535 625,573 655,618 700,575 750,495",
  "700,575 640,640 595,670 560,700 580,720",
  "700,575 712,600 690,640 720,680 725,705",
  "712,600 755,650",
  "640,640 658,672 640,700",
  "690,645 658,672",
  "715,678 820,612 820,715 822,790",
  "885,578 885,655 918,675",
  "818,645 870,655 870,685 895,683 920,690",
  "818,690 860,688 870,685",
  "895,683 870,730 870,800 850,840",
  "708,708 770,705 815,715 880,710",
  "708,708 700,770 712,798 870,790 945,805",
  "705,748 820,740 870,740 930,745 955,710",
  "712,798 660,815 630,825",
  "245,605 180,583 148,605",
  "245,605 260,600 235,635 268,672 260,705 220,717 180,677 148,677",
  "317,530 280,540 245,605",
  "220,717 240,742 290,750 323,750 348,720 352,698 430,740 455,742 515,715",
  "522,768 545,745 590,720 605,708 625,718 660,715 678,738 705,733 695,770 672,805 630,820 622,795 608,790 590,800 560,795 525,780 522,768",
];
const LINES_B = [
  "85,200 30,157 60,100 88,75",
  "95,250 170,322 190,340 195,365 190,390 215,410 243,405 250,430 295,440 340,500 370,565 405,690 400,730 380,770 440,900",
  "945,0",
  "893,112 885,170 885,210 878,250 880,400 870,440 860,540 858,585 725,730 800,900",
  "262,150 272,182 290,180 310,210 328,245 375,290 380,320 395,380 430,460 460,510 465,550",
  "380,140 355,175 350,185 310,208",
  "310,210 260,225 235,245 220,285 175,320",
  "220,285 250,302 290,320 300,345 313,368 338,410 337,437 380,450 410,460",
  "250,302 328,245 400,208 450,195 495,205",
  "385,180 420,150 450,165 495,205 520,225 570,230",
  "395,130 450,165 510,200",
  "385,180 395,208",
  "400,208 405,240 450,270 490,240 450,195",
  "375,318 440,295 490,285 530,322 505,350 560,420",
  "450,270 445,292 460,340 435,355 465,380 472,450",
  "490,285 510,275 520,270 580,275 590,300 600,310 615,342 570,350 550,320 530,325",
  "490,240 520,225 570,230 585,260 580,275",
  "570,230 625,215 705,205 805,195 885,205",
  "625,215 630,265 640,320 620,340 615,320",
  "705,205 700,240 710,265 725,275 740,245 780,240 805,195",
  "630,265 650,275 700,240",
  "640,325 680,325 710,305 730,285 740,245",
  "780,240 785,290 795,310 835,350 830,385",
  "710,305 720,325 715,360 730,390",
  "720,325 760,320 795,310",
  "760,320 772,380",
  "795,310 810,380",
  "785,245 878,250",
  "640,320 655,370 655,400 730,390 815,380 830,385 880,405",
  "655,400 605,415 560,425 480,450 450,465",
  "570,350 610,415 650,490",
  "590,350 615,410",
  "725,390 750,460 750,490",
  "600,415 620,490 610,495 640,490 620,435",
  "640,420 690,460 695,490",
  "650,490 615,545",
  "650,490 775,492 815,538 860,538",
  "560,425 575,490 600,540 615,545",
  "450,465 470,482 520,465 570,458",
  "480,482 470,550 465,545",
  "470,550 550,528 550,548 615,545",
  "615,545 660,585 725,730",
  "550,548 525,565 520,590 490,605 490,645 470,658 395,658",
  "460,658 460,690 485,713 545,713 580,687 705,687",
  "430,460 385,490 345,500",
  "385,490 410,510 410,525 435,515 460,510",
  "410,525 390,560 370,565 425,580 440,560 465,550",
  "380,320 313,368",
  "310,365 295,367 245,410",
  "337,410 395,380 465,380 510,362",
  "298,440 337,435",
];
const LINES_C = [
  "165,100 140,170 232,370 390,590 603,1123 850,1025 880,1018 485,130",
];

const MapLines = ({ items, tf }: { items: string[]; tf: string }) => (
  <g transform={tf} fill="none" stroke="#474044" strokeWidth="1" strokeLinejoin="round">
    {items.map((p, i) => (
      <polyline key={i} points={p} vectorEffect="non-scaling-stroke" />
    ))}
  </g>
);
const TA = "translate(900 120) scale(.33333)";
const TB = "translate(920 320) scale(.33333)";
const TC = "translate(1000 520) scale(.33333)";

const NOTES = [
  { x: 4, y: 71, w: 1262, h: 33 },
  { x: 1, y: 105, w: 300, h: 394 },
  { x: 1, y: 506, w: 302, h: 235 },
  { x: 309, y: 112, w: 1602, h: 769 },
  { x: 961, y: 886, w: 956, h: 58 },
  { x: 1031, y: 9, w: 37, h: 58 },
  { x: 4, y: 902, w: 202, h: 42 },
];
const NUMS: [string, number, number][] = [
  ["2", 112, 86],
  ["7", 207, 304],
  ["3", 520, 314],
  ["1", 142, 657],
  ["4", 974, 923],
  ["5", 1049, 25],
  ["6", 160, 923],
];

export default function App() {
  return (
    <Page>
      <Global />
      <TopEdge />
      <MenuBar>
        {MENU.map(([t, w], i) => (
          <MenuItem key={i} $w={w}>{t}</MenuItem>
        ))}
      </MenuBar>
      <ToolRow $h={38} $bg="#f5f5f4" $line>
        <Tools items={ROW1} />
      </ToolRow>
      <ToolRow $h={41} $bg="#f1f1f1">
        <Tools items={ROW2} />
      </ToolRow>
      <Main>
        <Dock>
          <PanelHead>
            <PanelTitle>Selain</PanelTitle>
            <FloatBtn><Ico n="tfolder" s={8} /></FloatBtn>
            <FloatBtn>✕</FloatBtn>
          </PanelHead>
          <PanelTools>
            {["addres", "refresh", "filter", "collapse", "info"].map((n) => (
              <PanelBtn key={n}><Ico n={n} s={16} /></PanelBtn>
            ))}
          </PanelTools>
          <TreeBox>
            <TreeList>
              {TREE.map(([ic, t, open]) => (
                <TreeRow key={t}>
                  <Twisty $open={open} />
                  <TreeIcon><Ico n={ic} s={17} /></TreeIcon>
                  {t}
                </TreeRow>
              ))}
            </TreeList>
            <ScrollBar>
              <ScrollCap />
              <ScrollTrack />
              <ScrollThumb />
            </ScrollBar>
          </TreeBox>
          <Splitter />
          <PanelHead>
            <PanelTitle>Tasot</PanelTitle>
            <FloatBtn><Ico n="tfolder" s={8} /></FloatBtn>
            <FloatBtn>✕</FloatBtn>
          </PanelHead>
          <PanelTools>
            <PanelBtn><Ico n="brush" s={16} /></PanelBtn>
            <PanelBtn><Ico n="addgroup" s={16} /></PanelBtn>
            <PanelBtn><Ico n="eye" s={16} /></PanelBtn>
            <PanelBtn><Ico n="filter" s={16} /></PanelBtn>
            <PanelBtn><Ico n="epsilon" s={16} /></PanelBtn>
            <PanelDrop />
            <PanelBtn><Ico n="expand" s={16} /></PanelBtn>
            <PanelBtn><Ico n="collapse" s={16} /></PanelBtn>
            <PanelBtn><Ico n="remove" s={16} /></PanelBtn>
          </PanelTools>
          <LayerList>
            <LayerRow>
              <LayerCheck>
                <svg width="10" height="10" viewBox="0 0 10 10"><path d="M2 5l2 3 4-7" fill="none" stroke="#000" strokeWidth="1.800" /></svg>
              </LayerCheck>
              <Swatch />
              <LayerName>Espoon alueet — Pienalueet</LayerName>
            </LayerRow>
          </LayerList>
        </Dock>
        <Canvas>
          <svg viewBox="304 106 1613 807" preserveAspectRatio="none">
            <g fill="#f4a6b3">
              <polygon points={FILL_A} transform={TA} />
              <polygon points={FILL_B} transform={TB} />
              <polygon points={FILL_C} transform={TC} />
            </g>
            <polygon points={HOLE} transform={TA} fill="#fff" />
            <MapLines items={LINES_A} tf={TA} />
            <MapLines items={LINES_B} tf={TB} />
            <MapLines items={LINES_C} tf={TC} />
          </svg>
        </Canvas>
      </Main>
      <StatusBar>
        <SearchBox>
          <Ico n="search" s={14} />
          Etsi (Ctrl+K)
        </SearchBox>
        <StatusGroup>
          <StatusLabel $w={67} $gap={4}>Koordinaatit</StatusLabel>
          <Field $w={126} $gap={4}>&nbsp;6667542&nbsp;&nbsp;25446010</Field>
          <StatusIcon $w={18} $gap={13}><Ico n="crossed" s={18} /></StatusIcon>
          <StatusLabel $w={58} $gap={4}>Mittakaava</StatusLabel>
          <Field $w={96} $gap={9}>1:253255<ComboArrow /></Field>
          <StatusIcon $w={16} $gap={9}><Ico n="lock" s={15} /></StatusIcon>
          <StatusLabel $w={57} $gap={4}>Suurennus</StatusLabel>
          <Field $w={93} $gap={10}>100%<Spinner><SpinUp /><SpinDown /></Spinner></Field>
          <StatusLabel $w={33} $gap={9}>Kierto</StatusLabel>
          <Field $w={93} $gap={7}>0,0 °<Spinner><SpinUp /><SpinDown /></Spinner></Field>
          <StatusCheck>
            <svg width="11" height="11" viewBox="0 0 10 10"><path d="M2 5l2 3 4-7" fill="none" stroke="#000" strokeWidth="1.500" /></svg>
          </StatusCheck>
          <StatusLabel $w={28} $gap={17}>Piirrä</StatusLabel>
          <StatusIcon $w={16} $gap={2}><Ico n="sglobe" s={14} /></StatusIcon>
          <StatusLabel $w={58} $gap={22}>EPSG:3879</StatusLabel>
          <StatusIcon $w={18} $gap={0}><Ico n="msg" s={17} /></StatusIcon>
        </StatusGroup>
      </StatusBar>
      {NOTES.map((n, i) => (
        <Note key={i} $x={n.x} $y={n.y} $w={n.w} $h={n.h} />
      ))}
      {NUMS.map(([t, x, y]) => (
        <NoteNum key={t} $x={x} $y={y}>{t}</NoteNum>
      ))}
    </Page>
  );
}
